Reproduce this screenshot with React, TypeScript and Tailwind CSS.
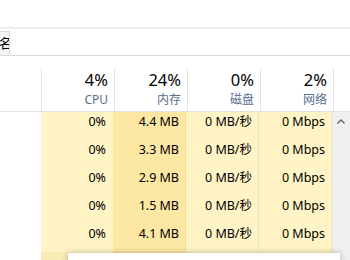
import React from "react"

type Row = { cpu: string; mem: string; disk: string; net: string }

const rows: Row[] = [
  { cpu: "0%", mem: "4.4 MB", disk: "0 MB/秒", net: "0 Mbps" },
  { cpu: "0%", mem: "3.3 MB", disk: "0 MB/秒", net: "0 Mbps" },
  { cpu: "0%", mem: "2.9 MB", disk: "0 MB/秒", net: "0 Mbps" },
  { cpu: "0%", mem: "1.5 MB", disk: "0 MB/秒", net: "0 Mbps" },
  { cpu: "0%", mem: "4.1 MB", disk: "0 MB/秒", net: "0 Mbps" },
]

const headers = [
  { pct: "4%", label: "CPU" },
  { pct: "24%", label: "内存" },
  { pct: "0%", label: "磁盘" },
  { pct: "2%", label: "网络" },
]

export default function App() {
  return (
    <div
      className="relative w-[350px] h-[260px] overflow-hidden bg-white text-black"
      style={{ fontFamily: '"Noto Sans", "Noto Sans CJK SC", sans-serif' }}
    >
      {/* top blank area */}
      <div className="h-[27px]" />
      {/* tab strip */}
      <div className="border-t-2 border-[#eeeeee] h-[29px] pt-[2px] border-b border-b-[#d9d9d9]">
        <div className="flex h-full">
          <div className="w-[10px] h-full overflow-hidden bg-[#f3f3f3] border-t border-r border-[#dadada] flex items-center justify-end">
            <span className="text-[13px] leading-none shrink-0 mr-[-3px]">名</span>
          </div>
        </div>
      </div>

      {/* header */}
      <div className="flex h-[56px] border-b border-[#e2e2e2]">
        <div className="w-[41px] shrink-0" />
        {headers.map((h) => (
          <div key={h.label} className="w-[73px] shrink-0 pt-[12px]">
            <div className="h-full border-l border-[#e5e5e5] flex flex-col items-end pr-[6px]">
              <span className="text-[16.5px] leading-[22px] mt-[1px]">{h.pct}</span>
              <span className="text-[12px] leading-[18px] text-[#5b6e8c]">{h.label}</span>
            </div>
          </div>
        ))}
        <div className="flex-1 pt-[12px]">
          <div className="h-full border-l border-[#e5e5e5]" />
        </div>
      </div>

      {/* data */}
      <div className="flex">
        <div className="w-[41px] shrink-0" />
        <div className="flex flex-col">
          {rows.map((r, i) => (
            <div key={i} className="flex h-[28px] text-[12.5px] leading-[16px]">
              <div className="w-[72px] shrink-0 bg-[#fff4c5] text-right pr-[7px] pt-[2px]">{r.cpu}</div>
              <div className="w-[73px] shrink-0 bg-[#fce8a3] text-right pr-[6px] pt-[2px] border-r border-[#f0dc98]">{r.mem}</div>
              <div className="w-[73px] shrink-0 bg-[#fff4c5] text-right pr-[6px] pt-[2px] border-r border-[#f4e6b2]">{r.disk}</div>
              <div className="w-[73px] shrink-0 bg-[#fff4c5] text-right pr-[6px] pt-[2px] border-r border-[#f4e6b2]">{r.net}</div>
            </div>
          ))}
          <div className="flex h-[20px]">
            <div className="w-[72px] bg-[#f8ebb5]" />
            <div className="w-[73px] bg-[#f5e3a0]" />
            <div className="w-[146px] bg-[#f8ebb5]" />
          </div>
        </div>
        {/* scrollbar */}
        <div className="flex-1 bg-[#efefef] flex flex-col">
          <div className="h-[18px] flex items-center justify-center">
            <svg width="8" height="5" viewBox="0 0 8 5">
              <path d="M0.5 4.5 L4 1 L7.5 4.5" fill="none" stroke="#606060" strokeWidth="1.3" />
            </svg>
          </div>
        </div>
      </div>

      {/* popup overlapping bottom */}
      <div className="absolute left-[68px] top-[253px] w-[272px] h-[20px] bg-white shadow-[0_0_6px_rgba(0,0,0,0.25)]" />
    </div>
  )
}
